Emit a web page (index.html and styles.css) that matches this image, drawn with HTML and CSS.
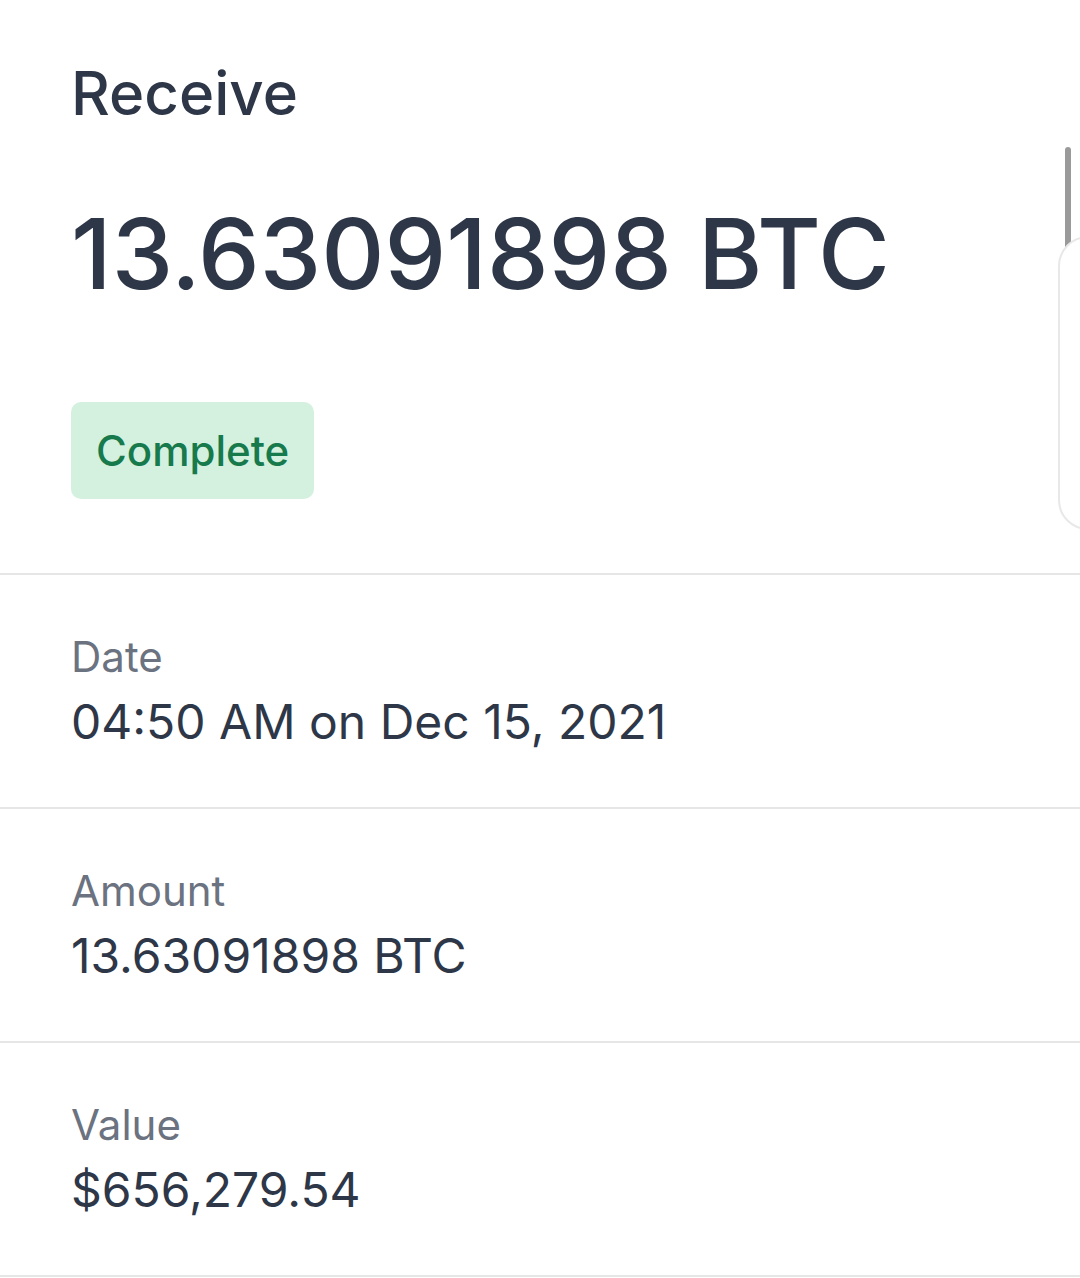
FILE: index.html
```html
<!DOCTYPE html>
<html lang="en">
<head>
    <meta charset="UTF-8">
    <meta name="viewport" content="width=device-width, initial-scale=1.0">
    <title>Receive - Transaction</title>
    <link rel="stylesheet" href="styles.css">
</head>
<body>
    <div class="sheet">
        <!-- Summary -->
        <section class="summary">
            <h1 class="kind">Receive</h1>
            <div class="total">13.63091898 BTC</div>
            <span class="badge">Complete</span>
        </section>

        <!-- Details -->
        <div class="row">
            <div class="label">Date</div>
            <div class="value">04:50 AM on Dec 15, 2021</div>
        </div>
        <div class="row">
            <div class="label">Amount</div>
            <div class="value">13.63091898 BTC</div>
        </div>
        <div class="row">
            <div class="label">Value</div>
            <div class="value">$656,279.54</div>
        </div>
    </div>

    <div class="scrollbar"></div>
    <div class="edge-card"></div>
</body>
</html>
```

FILE: styles.css
```css
body {
    margin: 0;
    padding: 0;
    background-color: #fff;
    font-family: Inter, "Noto Sans", Arial, sans-serif;
    color: #2e3748;
    overflow: hidden;
}
.sheet {
    width: 1080px;
}
.summary {
    padding: 54px 71px 0;
    height: 519px;
    border-bottom: 2px solid #e6e6e6;
}
.kind {
    margin: 0;
    font-size: 60px;
    font-weight: 500;
    line-height: 78px;
}
.total {
    margin-top: 70px;
    font-size: 98px;
    font-weight: 500;
    line-height: 104px;
}
.badge {
    display: inline-block;
    margin-top: 96px;
    padding: 0 25px;
    height: 97px;
    line-height: 97px;
    border-radius: 10px;
    background-color: #d4f1df;
    color: #177a4c;
    font-size: 42px;
    font-weight: 500;
}
.row {
    padding: 0 71px;
    height: 232px;
    border-bottom: 2px solid #e6e6e6;
}
.label {
    padding-top: 57px;
    font-size: 42px;
    line-height: 50px;
    color: #6b7280;
}
.value {
    margin-top: 10px;
    font-size: 48px;
    line-height: 60px;
}
.scrollbar {
    position: absolute;
    top: 147px;
    left: 1065px;
    width: 6px;
    height: 131px;
    border-radius: 3px;
    background-color: #9a9a9a;
}
.edge-card {
    position: absolute;
    top: 236px;
    left: 1058px;
    width: 60px;
    height: 290px;
    border: 2px solid #e8e8e8;
    border-radius: 30px;
    background-color: #fff;
}
```
